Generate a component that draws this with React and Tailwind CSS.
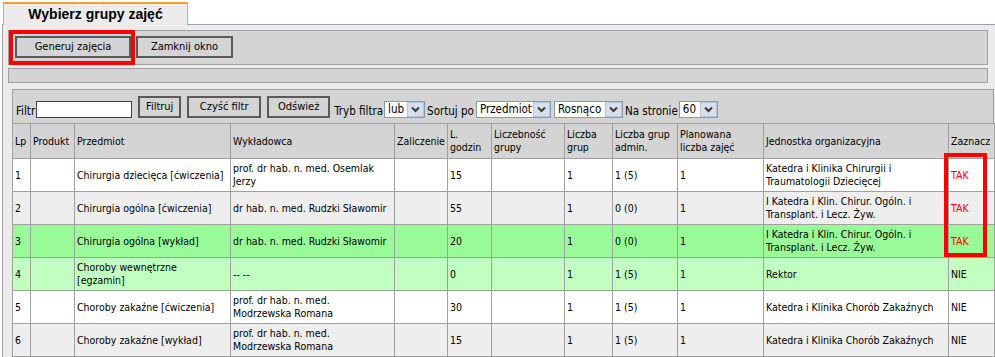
import React from "react";

const rows = [
  {
    lp: "1",
    przedmiot: ["Chirurgia dziecięca [ćwiczenia]"],
    wyk: ["prof. dr hab. n. med. Osemlak", "Jerzy"],
    godz: "15",
    grup: "1",
    admin: "1 (5)",
    plan: "1",
    jedn: ["Katedra i Klinika Chirurgii i", "Traumatologii Dziecięcej"],
    zazn: "TAK",
    bg: "bg-white",
  },
  {
    lp: "2",
    przedmiot: ["Chirurgia ogólna [ćwiczenia]"],
    wyk: ["dr hab. n. med. Rudzki Sławomir"],
    godz: "55",
    grup: "1",
    admin: "0 (0)",
    plan: "1",
    jedn: ["I Katedra i Klin. Chirur. Ogóln. i", "Transplant. i Lecz. Żyw."],
    zazn: "TAK",
    bg: "bg-[#eeeeee]",
  },
  {
    lp: "3",
    przedmiot: ["Chirurgia ogólna [wykład]"],
    wyk: ["dr hab. n. med. Rudzki Sławomir"],
    godz: "20",
    grup: "1",
    admin: "0 (0)",
    plan: "1",
    jedn: ["I Katedra i Klin. Chirur. Ogóln. i", "Transplant. i Lecz. Żyw."],
    zazn: "TAK",
    bg: "bg-[#98fb98]",
  },
  {
    lp: "4",
    przedmiot: ["Choroby wewnętrzne", "[egzamin]"],
    wyk: ["-- --"],
    godz: "0",
    grup: "1",
    admin: "1 (5)",
    plan: "1",
    jedn: ["Rektor"],
    zazn: "NIE",
    bg: "bg-[#c1ffc1]",
  },
  {
    lp: "5",
    przedmiot: ["Choroby zakaźne [ćwiczenia]"],
    wyk: ["prof. dr hab. n. med.", "Modrzewska Romana"],
    godz: "30",
    grup: "1",
    admin: "1 (5)",
    plan: "1",
    jedn: ["Katedra i Klinika Chorób Zakaźnych"],
    zazn: "NIE",
    bg: "bg-white",
  },
  {
    lp: "6",
    przedmiot: ["Choroby zakaźne [wykład]"],
    wyk: ["prof. dr hab. n. med.", "Modrzewska Romana"],
    godz: "15",
    grup: "1",
    admin: "1 (5)",
    plan: "1",
    jedn: ["Katedra i Klinika Chorób Zakaźnych"],
    zazn: "NIE",
    bg: "bg-[#eeeeee]",
  },
];

const headers = [
  [["Lp"], "w-[18px]"],
  [["Produkt"], "w-[44px]"],
  [["Przedmiot"], "w-[156px]"],
  [["Wykładowca"], "w-[164px]"],
  [["Zaliczenie"], "w-[53px]"],
  [["L.", "godzin"], "w-[44px]"],
  [["Liczebność", "grupy"], "w-[73px]"],
  [["Liczba", "grup"], "w-[48px]"],
  [["Liczba grup", "admin."], "w-[65px]"],
  [["Planowana", "liczba zajęć"], "w-[86px]"],
  [["Jednostka organizacyjna"], "w-[185px]"],
  [["Zaznacz"], "w-[46px]"],
];

const Lines = ({ lines }) =>
  lines.map((l, i) => (
    <div key={i}>{l}</div>
  ));

const Chevron = () => (
  <svg width="9" height="7" viewBox="0 0 9 7">
    <path
      d="M1 1.5 L4.5 5 L8 1.5"
      fill="none"
      stroke="#3a3a3a"
      strokeWidth="2"
    />
  </svg>
);

const Select = ({ value, width }) => (
  <div
    className={`flex h-[17px] border border-[#7f9db9] bg-white ${width}`}
  >
    <div className="flex-1 pl-[3px] leading-[14px] text-[11.5px]">
      {value}
    </div>
    <div className="w-[17px] border border-[#b8c4d8] bg-[#d9deea] flex items-center justify-center">
      <Chevron />
    </div>
  </div>
);

const Btn = ({ children, className }) => (
  <button
    className={`border-2 border-[#5a5a5a] bg-[#d4d4d4] text-[11px] leading-[14px] ${className}`}
  >
    {children}
  </button>
);

const Cell = ({ children, className = "" }) => (
  <td
    className={`border border-[#a0a0a0] px-[2px] align-middle leading-[13px] whitespace-nowrap ${className}`}
  >
    {children}
  </td>
);

export default function App() {
  return (
    <div
      className="relative w-[995px] h-[357px] overflow-hidden bg-white text-black text-[10.5px]"
      style={{ fontFamily: "'DejaVu Sans Condensed', 'Liberation Sans', sans-serif" }}
    >
      {/* TAB */}
      <div className="ml-[3px] pt-[2px] flex">
        <div
          className="w-[185px] h-[23px] -mb-[1px] relative z-10 border-t-2 border-t-[#f0a030] border-x border-x-[#a8b4c0] bg-[#ebebeb] flex items-center justify-center text-[14px] font-bold"
          style={{ fontFamily: "'Liberation Sans', Arial, sans-serif" }}
        >
          Wybierz grupy zajęć
        </div>
      </div>

      {/* PANEL */}
      <div className="ml-[2px] border-t border-t-[#90a4b4] border-l border-l-[#a0a0a0] bg-[#ebebeb] h-[333px] pt-[5px]">
        {/* TOOLBAR */}
        <div className="ml-[5px] w-[980px] h-[35px] border border-[#a0a0a0] bg-[#d4d4d4] flex gap-[5px] pl-[6px] pt-[5px]">
          <Btn className="w-[116px] h-[22px]">Generuj zajęcia</Btn>
          <Btn className="w-[97px] h-[22px]">Zamknij okno</Btn>
        </div>

        <div className="ml-[5px] mt-[3px] w-[980px] h-[15px] border border-[#a0a0a0] bg-[#d4d4d4]" />

        {/* FILTER + TABLE */}
        <div className="ml-[9px] mt-[6px] w-[982px]">
          <div className="h-[34px] border-t border-x border-[#a0a0a0] bg-[#d4d4d4] flex items-end pb-[5px] pl-[3px] text-[11.5px]">
            <span className="leading-[13px] mr-[1px]">Filtr</span>
            <div className="w-[96px] h-[17px] border border-[#404040] bg-white" />
            <Btn className="ml-[6px] w-[43px] h-[22px]">Filtruj</Btn>
            <Btn className="ml-[6px] w-[74px] h-[22px]">Czyść filtr</Btn>
            <Btn className="ml-[6px] w-[63px] h-[22px]">Odśwież</Btn>
            <span className="ml-[4px] mr-[1px] leading-[13px]">Tryb filtra</span>
            <Select value="lub" width="w-[41px]" />
            <span className="ml-[2px] mr-[2px] leading-[13px]">Sortuj po</span>
            <Select value="Przedmiot" width="w-[75px]" />
            <div className="ml-[3px]">
              <Select value="Rosnąco" width="w-[69px]" />
            </div>
            <span className="ml-[2px] mr-[1px] leading-[13px]">Na stronie</span>
            <Select value="60" width="w-[39px]" />
          </div>

          <table className="w-[982px] table-fixed border-collapse border border-[#a0a0a0]">
            <colgroup>
              {headers.map(([h, w]) => (
                <col key={h.join()} className={w} />
              ))}
            </colgroup>
            <thead>
              <tr className="h-[35px] bg-[#d4d4d4]">
                {headers.map(([h]) => (
                  <Cell key={h.join()}>
                    <Lines lines={h} />
                  </Cell>
                ))}
              </tr>
            </thead>
            <tbody>
              {rows.map((r) => (
                <tr key={r.lp} className={`h-[33px] ${r.bg}`}>
                  <Cell>{r.lp}</Cell>
                  <Cell></Cell>
                  <Cell>
                    <Lines lines={r.przedmiot} />
                  </Cell>
                  <Cell>
                    <Lines lines={r.wyk} />
                  </Cell>
                  <Cell></Cell>
                  <Cell>{r.godz}</Cell>
                  <Cell></Cell>
                  <Cell>{r.grup}</Cell>
                  <Cell>{r.admin}</Cell>
                  <Cell>{r.plan}</Cell>
                  <Cell>
                    <Lines lines={r.jedn} />
                  </Cell>
                  <Cell
                    className={
                      r.zazn === "TAK"
                        ? "text-[#ff0000]"
                        : ""
                    }
                  >
                    {r.zazn}
                  </Cell>
                </tr>
              ))}
            </tbody>
          </table>
        </div>
      </div>

      {/* RED HIGHLIGHTS */}
      <div className="absolute left-[9px] top-[30px] w-[126px] h-[35px] border-4 border-[#ff0000]" />
      <div className="absolute left-[944px] top-[153px] w-[43px] h-[104px] border-4 border-[#ff0000]" />
    </div>
  );
}
